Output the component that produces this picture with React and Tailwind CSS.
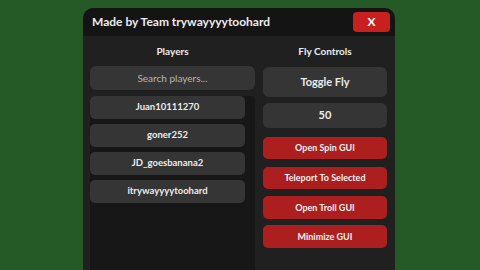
import React from "react";

const players = ["Juan10111270", "goner252", "JD_goesbanana2", "itrywayyyytoohard"];
const redButtons = [
  { label: "Open Spin GUI", mt: "mt-[9px]", h: "h-[22px]" },
  { label: "Teleport To Selected", mt: "mt-[8px]", h: "h-[22px]" },
  { label: "Open Troll GUI", mt: "mt-[7px]", h: "h-[23px]" },
  { label: "Minimize GUI", mt: "mt-[6px]", h: "h-[23px]" },
];

export default function App() {
  return (
    <div
      className="w-[480px] h-[270px] overflow-hidden bg-[#255a27] text-[#ececec]"
      style={{ fontFamily: "Lato, 'Noto Sans', sans-serif" }}
    >
      <div className="ml-[83px] mt-[8px] w-[312px] h-[290px] rounded-[10px] bg-[#202020] overflow-hidden">
        {/* header */}
        <div className="h-[28px] bg-[#141414] flex items-center justify-between pl-[9px] pr-[5px] rounded-t-[10px]">
          <span className="text-[12px] font-bold">Made by Team trywayyyytoohard</span>
          <button className="w-[37px] h-[20px] rounded-[4px] bg-[#c81f1f] text-white text-[12px] font-bold flex items-center justify-center">
            X
          </button>
        </div>

        <div className="flex pl-[7px] pr-[8px] gap-[8px]">
          {/* players */}
          <div className="w-[165px] flex flex-col">
            <div className="h-[30px] flex items-center justify-center text-[10px] font-bold">Players</div>
            <div className="h-[24px] rounded-[6px] bg-[#353535] flex items-center justify-center text-[10px] text-[#b5b5b5]">
              Search players...
            </div>
            <div className="mt-[6px] h-[200px] bg-[#171717] rounded-[4px] pr-[10px] flex flex-col gap-[5px]">
              {players.map((p) => (
                <div
                  key={p}
                  className="h-[23px] rounded-[5px] bg-[#353535] flex items-center justify-center text-[9.5px] font-bold"
                >
                  {p}
                </div>
              ))}
            </div>
          </div>

          {/* fly controls */}
          <div className="w-[124px] flex flex-col">
            <div className="h-[30px] flex items-center justify-center text-[10px] font-bold">Fly Controls</div>
            <div className="mt-[1px] h-[30px] rounded-[6px] bg-[#353535] flex items-center justify-center text-[11px] font-bold">
              Toggle Fly
            </div>
            <div className="mt-[6px] h-[25px] rounded-[6px] bg-[#353535] flex items-center justify-center text-[11px] font-bold">
              50
            </div>
            {redButtons.map((b) => (
              <div
                key={b.label}
                className={`${b.mt} ${b.h} rounded-[5px] bg-[#ad1e1e] flex items-center justify-center text-[9px] font-bold text-[#f2f2f2]`}
              >
                {b.label}
              </div>
            ))}
          </div>
        </div>
      </div>
    </div>
  );
}
